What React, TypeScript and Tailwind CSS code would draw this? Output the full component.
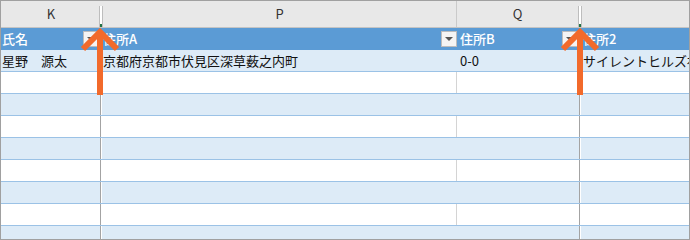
import React from 'react';

const font = { fontFamily: '"Noto Sans CJK JP", "Noto Sans", sans-serif' };

const FilterButton: React.FC = () => (
  <div className="w-[16px] h-[16px] bg-[#f4f4f4] border border-[#bcbcbc] flex items-center justify-center shrink-0">
    <div className="w-0 h-0 border-l-[4px] border-r-[4px] border-t-[4px] border-l-transparent border-r-transparent border-t-[#555555]" />
  </div>
);

const HiddenMark: React.FC = () => (
  <div className="w-[4px] h-full flex flex-col justify-end shrink-0">
    <div className="h-[21px] border-l border-r border-[#bdbdbd] bg-white flex flex-col justify-end">
      <div className="h-[3px] bg-[#217346]" />
    </div>
  </div>
);

const DataRow: React.FC<{ band: boolean; cells?: string[] }> = ({ band, cells = ['', '', '', ''] }) => {
  const bg = band ? 'bg-[#ddebf7]' : 'bg-white';
  return (
    <div className={`flex h-[22px] border-b border-[#9bc2e6] text-[13px] text-[#111] ${bg}`}>
      <div className="w-[99px] pl-[1px] flex items-center whitespace-nowrap overflow-hidden">{cells[0]}</div>
      <div className="w-[1px] bg-[#a3a3a3]" />
      <div className="w-[1px] bg-white" />
      <div className="w-[354px] pl-[1px] flex items-center whitespace-nowrap overflow-hidden">{cells[1]}</div>
      <div className={`w-[1px] ${band ? 'bg-[#ddebf7]' : 'bg-[#d4d4d4]'}`} />
      <div className="w-[122px] pl-[3px] flex items-center whitespace-nowrap overflow-hidden">{cells[2]}</div>
      <div className="w-[1px] bg-[#a3a3a3]" />
      <div className="w-[1px] bg-white" />
      <div className="flex-1 pl-[2px] flex items-center whitespace-nowrap overflow-hidden">{cells[3]}</div>
    </div>
  );
};

const App: React.FC = () => {
  const bands = [false, true, false, true, false, true, false, true];
  return (
    <div className="relative w-[690px] h-[240px] border border-[#a0a0a0] bg-white overflow-hidden" style={font}>
      {/* column letters */}
      <div className="flex h-[27px] bg-[#e8e8e8] border-b border-[#c4c4c4] text-[13px] text-[#333]">
        <div className="w-[98px] flex items-center justify-center pl-[2px]">K</div>
        <HiddenMark />
        <div className="w-[353px] flex items-center justify-center">P</div>
        <div className="w-[1px] bg-[#cacaca]" />
        <div className="w-[121px] flex items-center justify-center">Q</div>
        <HiddenMark />
        <div className="flex-1" />
      </div>

      {/* table header */}
      <div className="flex h-[22px] bg-[#5b9bd5] text-[13px] font-medium text-white">
        <div className="w-[99px] pl-[1px] pr-[1px] flex items-center justify-between">
          <span>氏名</span>
          <FilterButton />
        </div>
        <div className="w-[2px]" />
        <div className="w-[355px] pl-[1px] flex items-center justify-between">
          <span>住所A</span>
          <FilterButton />
        </div>
        <div className="w-[122px] pl-[3px] pr-[1px] flex items-center justify-between">
          <span>住所B</span>
          <FilterButton />
        </div>
        <div className="w-[2px]" />
        <div className="flex-1 pl-[2px] flex items-center">住所2</div>
      </div>

      <DataRow band cells={['星野　源太', '京都府京都市伏見区深草薮之内町', '0-0', 'サイレントヒルズ神']} />
      {bands.map((b, i) => (
        <DataRow key={i} band={b} />
      ))}

      {/* orange arrows */}
      <svg className="absolute left-0 top-0" width="690" height="240" viewBox="0 0 690 240">
        {[99, 579].map((x) => (
          <g key={x} stroke="#f26a2b" strokeWidth="6" fill="none">
            <polyline points={`${x - 17},${48} ${x},${31} ${x + 17},${48}`} strokeLinejoin="miter" />
            <line x1={x} y1={32} x2={x} y2={94} />
          </g>
        ))}
      </svg>
    </div>
  );
};

export default App;
